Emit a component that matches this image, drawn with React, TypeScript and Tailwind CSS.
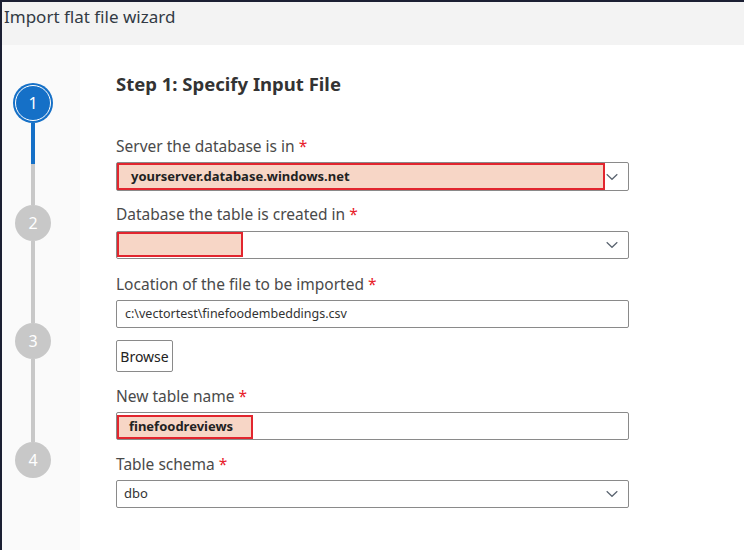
import React from "react";

const font = { fontFamily: '"Noto Sans", "Open Sans", sans-serif' };

function Chevron() {
  return (
    <svg width="12" height="7" viewBox="0 0 12 7" className="absolute right-[10px] top-1/2 -translate-y-1/2">
      <path d="M0.7 0.7 L6 5.8 L11.3 0.7" fill="none" stroke="#5a6470" strokeWidth="1.2" />
    </svg>
  );
}

function Label({ text }: { text: string }) {
  return (
    <div className="text-[15.5px] leading-[22px] text-[#4a4a4a]">
      {text} <span className="text-[#e8202a]">*</span>
    </div>
  );
}

function Highlight({ w, children, cls = "" }: { w: string; children?: React.ReactNode; cls?: string }) {
  return (
    <div className={`absolute left-0 top-0 bottom-0 ${w} bg-[#f7d6c6] border-2 border-[#e2252e] flex items-center ${cls}`}>
      {children}
    </div>
  );
}

export default function App() {
  return (
    <div style={font} className="w-[744px] h-[550px] bg-white border-l-2 border-t-2 border-[#1b1f33] flex flex-col overflow-hidden">
      <div className="h-[43px] bg-[#f3f3f3] flex items-start pl-[2px] pt-[4px]">
        <span className="text-[17px] leading-[22px] text-[#323a45]">Import flat file wizard</span>
      </div>
      <div className="flex flex-1">
        <div className="w-[78px] bg-[#fafafa] flex flex-col items-center pt-[38px] pr-[16px]">
          <div className="w-10 h-10 rounded-full bg-[#1570c7] p-[2px]">
            <div className="w-full h-full rounded-full border-[1.5px] border-white bg-[#1570c7] flex items-center justify-center text-white text-[16px]">
              1
            </div>
          </div>
          <div className="w-1 h-[41px] bg-[#1570c7]" />
          <div className="w-1 h-[41px] bg-[#c8c8c8]" />
          <div className="w-9 h-9 rounded-full bg-[#c8c8c8] flex items-center justify-center text-white text-[16px]">2</div>
          <div className="w-1 h-[82px] bg-[#c8c8c8]" />
          <div className="w-9 h-9 rounded-full bg-[#c8c8c8] flex items-center justify-center text-white text-[16px]">3</div>
          <div className="w-1 h-[83px] bg-[#c8c8c8]" />
          <div className="w-9 h-9 rounded-full bg-[#c8c8c8] flex items-center justify-center text-white text-[16px]">4</div>
        </div>
        <div className="flex-1 pl-[36px] pt-[26px]">
          <div className="text-[18.5px] leading-[26px] font-bold text-[#333]">Step 1: Specify Input File</div>
          <div className="w-[513px] flex flex-col">
            <div className="mt-[38px]"><Label text="Server the database is in" /></div>
            <div className="mt-[5px] relative h-[29px] border border-[#8a8a8a] rounded-[2px]">
              <Highlight w="w-[488px]" cls="pl-[12px]">
                <span className="text-[13px] font-bold text-[#222]">yourserver.database.windows.net</span>
              </Highlight>
              <Chevron />
            </div>
            <div className="mt-[12px]"><Label text="Database the table is created in" /></div>
            <div className="mt-[6px] relative h-[28px] border border-[#8a8a8a] rounded-[2px]">
              <div className="absolute left-0 top-0 w-[126px] h-[25px] bg-[#f7d6c6] border-2 border-[#e2252e]" />
              <Chevron />
            </div>
            <div className="mt-[14px]"><Label text="Location of the file to be imported" /></div>
            <div className="mt-[5px] h-[28px] border border-[#8a8a8a] rounded-[2px] flex items-center pl-[8px]">
              <span className="text-[12.5px] text-[#333]">c:\vectortest\finefoodembeddings.csv</span>
            </div>
            <div className="mt-[12px] w-[57px] h-[32px] border border-[#8a8a8a] rounded-[2px] flex items-center justify-center text-[14px] text-[#222]">
              Browse
            </div>
            <div className="mt-[13px]"><Label text="New table name" /></div>
            <div className="mt-[5px] relative h-[28px] border border-[#8a8a8a] rounded-[2px]">
              <div className="absolute left-0 top-[2px] w-[136px] h-[24px] bg-[#f7d6c6] border-2 border-[#e2252e] flex items-center pl-[10px]">
                <span className="text-[13px] font-bold text-[#222]">finefoodreviews</span>
              </div>
            </div>
            <div className="mt-[13px]"><Label text="Table schema" /></div>
            <div className="mt-[5px] relative h-[28px] border border-[#8a8a8a] rounded-[2px] flex items-center pl-[7px]">
              <span className="text-[13px] text-[#333]">dbo</span>
              <Chevron />
            </div>
          </div>
        </div>
      </div>
    </div>
  );
}
